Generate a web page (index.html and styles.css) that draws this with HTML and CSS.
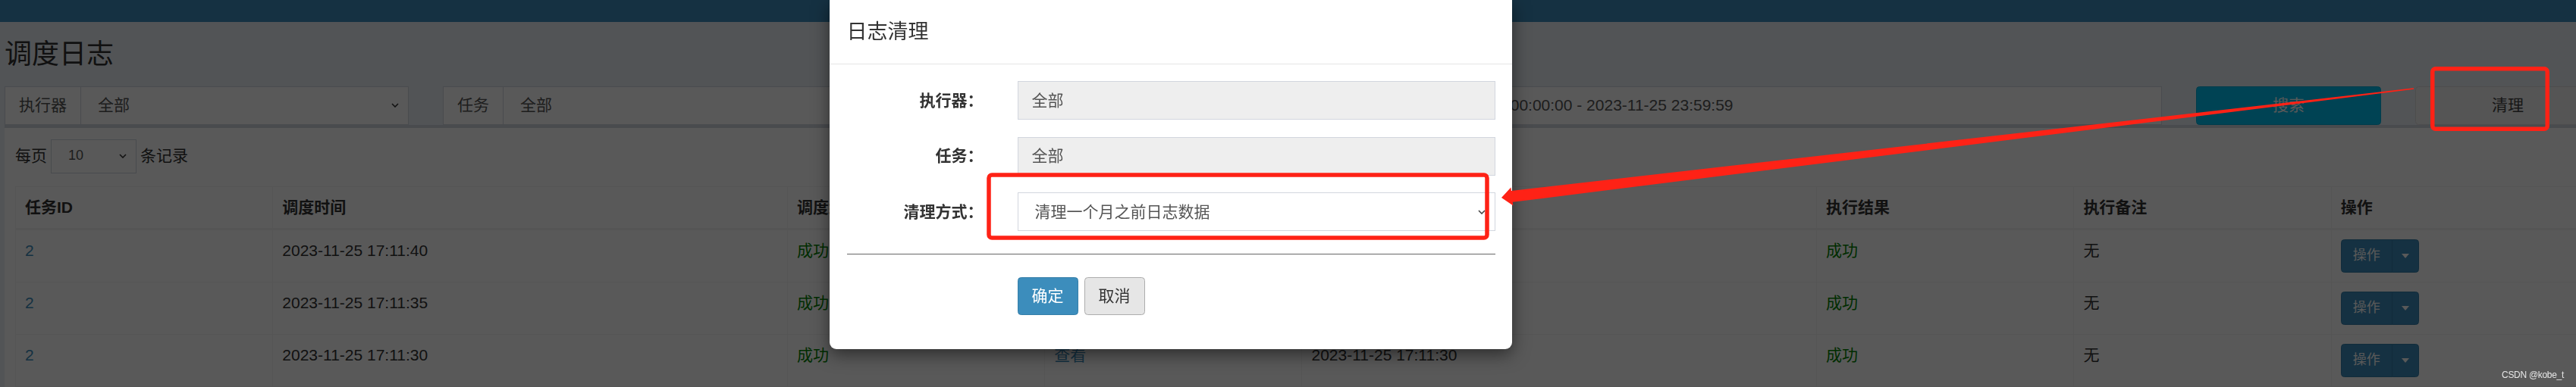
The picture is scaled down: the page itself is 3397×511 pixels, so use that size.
FILE: index.html
```html
<!DOCTYPE html>
<html lang="zh-CN">
<head>
<meta charset="utf-8">
<title>调度日志</title>
<link rel="stylesheet" href="styles.css">
</head>
<body>
<div class="page">
  <header class="topbar">
    <span class="topbar-link">注销</span>
  </header>
  <div class="wrapper">
    <section class="content-header">
      <h1>调度日志</h1>
    </section>
    <section class="content">
      <div class="filters">
        <div class="input-group span2">
          <span class="addon">执行器</span>
          <div class="control select"><span>全部</span><svg class="chev" viewBox="0 0 10 6"><path d="M1 1l4 4 4-4"/></svg></div>
        </div>
        <div class="input-group span2">
          <span class="addon">任务</span>
          <div class="control select"><span>全部</span><svg class="chev" viewBox="0 0 10 6"><path d="M1 1l4 4 4-4"/></svg></div>
        </div>
        <div class="input-group span2">
          <span class="addon">状态</span>
          <div class="control select"><span>全部</span><svg class="chev" viewBox="0 0 10 6"><path d="M1 1l4 4 4-4"/></svg></div>
        </div>
        <div class="input-group span4">
          <span class="addon">调度时间</span>
          <div class="control">2023-11-25 00:00:00 - 2023-11-25 23:59:59</div>
        </div>
        <div class="span1"><button class="btn btn-block btn-info" type="button">搜索</button></div>
        <div class="span1"><button class="btn btn-block btn-default" type="button">清理</button></div>
      </div>

      <div class="box">
        <div class="length">
          <span>每页</span>
          <div class="control select select-sm"><span>10</span><svg class="chev" viewBox="0 0 10 6"><path d="M1 1l4 4 4-4"/></svg></div>
          <span>条记录</span>
        </div>
        <table class="log-table">
          <colgroup>
            <col class="w10"><col class="w20"><col class="w10"><col class="w10"><col class="w20"><col class="w10"><col class="w10"><col class="w10">
          </colgroup>
          <thead>
            <tr><th>任务ID</th><th>调度时间</th><th>调度结果</th><th>调度备注</th><th>执行时间</th><th>执行结果</th><th>执行备注</th><th>操作</th></tr>
          </thead>
          <tbody>
            <tr>
              <td><a href="#">2</a></td><td>2023-11-25 17:11:40</td><td><span class="ok">成功</span></td><td><a href="#">查看</a></td><td>2023-11-25 17:11:40</td><td><span class="ok">成功</span></td><td>无</td>
              <td><div class="btn-group"><button class="btn btn-sm btn-primary" type="button">操作</button><button class="btn btn-sm btn-primary caret-btn" type="button"><span class="caret"></span></button></div></td>
            </tr>
            <tr>
              <td><a href="#">2</a></td><td>2023-11-25 17:11:35</td><td><span class="ok">成功</span></td><td><a href="#">查看</a></td><td>2023-11-25 17:11:35</td><td><span class="ok">成功</span></td><td>无</td>
              <td><div class="btn-group"><button class="btn btn-sm btn-primary" type="button">操作</button><button class="btn btn-sm btn-primary caret-btn" type="button"><span class="caret"></span></button></div></td>
            </tr>
            <tr>
              <td><a href="#">2</a></td><td>2023-11-25 17:11:30</td><td><span class="ok">成功</span></td><td><a href="#">查看</a></td><td>2023-11-25 17:11:30</td><td><span class="ok">成功</span></td><td>无</td>
              <td><div class="btn-group"><button class="btn btn-sm btn-primary" type="button">操作</button><button class="btn btn-sm btn-primary caret-btn" type="button"><span class="caret"></span></button></div></td>
            </tr>
          </tbody>
        </table>
      </div>
    </section>
  </div>
</div>

<div class="backdrop"></div>

<div class="modal">
  <div class="modal-header">
    <h4 class="modal-title">日志清理</h4>
  </div>
  <form class="modal-body">
    <div class="form-row">
      <label>执行器：</label>
      <div class="field"><div class="control disabled">全部</div></div>
    </div>
    <div class="form-row">
      <label>任务：</label>
      <div class="field"><div class="control disabled">全部</div></div>
    </div>
    <div class="form-row">
      <label>清理方式：</label>
      <div class="field"><div class="control select modal-select"><span>清理一个月之前日志数据</span><svg class="chev" viewBox="0 0 10 6"><path d="M1 1l4 4 4-4"/></svg></div></div>
    </div>
    <hr>
    <div class="form-row">
      <div class="field offset">
        <button class="btn btn-primary" type="button">确定</button>
        <button class="btn btn-cancel" type="button">取消</button>
      </div>
    </div>
  </form>
</div>

<svg class="annotations" viewBox="0 0 3397 511">
  <rect x="3207.75" y="90.75" width="151.5" height="79.5" rx="4"/>
  <rect x="1304" y="231" width="657" height="83" rx="4"/>
  <polygon class="arrow" points="1980,261 1992.4,247.6 1993,252 3182.9,116.3 3183.1,117.7 1994.8,266.8 1995.4,271.5"/>
</svg>

<div class="watermark">CSDN @kobe_t</div>
</body>
</html>
```

FILE: styles.css
```css
html, body {
  margin: 0;
  padding: 0;
}

body {
  position: relative;
  width: 3397px;
  height: 511px;
  overflow: hidden;
  background: #ecf0f5;
  font-family: "Liberation Sans", "Noto Sans CJK SC", sans-serif;
  font-size: 21px;
  line-height: 1.42857;
  color: #333;
}

.page {
  width: 3440px;
}

/* top navigation bar (scrolled, only its bottom is visible) */
.topbar {
  height: 29px;
  background: #3c8dbc;
  overflow: hidden;
  display: flex;
  justify-content: flex-end;
}

.topbar-link {
  color: #fff;
  font-size: 20px;
  line-height: 30px;
  margin-top: -27px;
  margin-right: 96px;
}

.wrapper {
  padding-left: 6px;
}

.content-header {
  padding-top: 22.5px;
}

.content-header h1 {
  margin: 0;
  font-size: 36px;
  line-height: 1.1;
  font-weight: 400;
  color: #333;
}

.content {
  padding-top: 22.5px;
}

/* filter row */
.filters {
  display: grid;
  grid-template-columns: repeat(12, 244px);
  column-gap: 45px;
}

.span1 { grid-column: span 1; }
.span2 { grid-column: span 2; }
.span4 { grid-column: span 4; }

.input-group {
  display: flex;
  height: 51px;
}

.addon {
  flex: none;
  padding: 0 18px;
  display: flex;
  align-items: center;
  border: 1px solid #d2d6de;
  border-right: 0;
  background: #fff;
  color: #555;
  white-space: nowrap;
}

.control {
  flex: 1;
  min-width: 0;
  box-sizing: border-box;
  height: 51px;
  display: flex;
  align-items: center;
  padding: 0 18px;
  border: 1px solid #d2d6de;
  background: #fff;
  color: #555;
  white-space: nowrap;
  overflow: hidden;
}

.control.select {
  justify-content: space-between;
  padding-left: 22px;
  padding-right: 12px;
}

.chev {
  flex: none;
  width: 10px;
  height: 6px;
  fill: none;
  stroke: #333;
  stroke-width: 1.6;
}

.btn {
  font-family: inherit;
  font-size: 21px;
  line-height: 30px;
  padding: 9px 18px;
  border: 1px solid transparent;
  border-radius: 4.5px;
  cursor: pointer;
  box-sizing: border-box;
}

.btn-block {
  display: block;
  width: 100%;
  height: 51px;
}

.btn-info {
  background: #00c0ef;
  border-color: #00acd6;
  color: #fff;
}

.btn-default {
  background: #f4f4f4;
  border-color: #ddd;
  color: #444;
}

.btn-primary {
  background: #3c8dbc;
  border-color: #367fa9;
  color: #fff;
}

.btn-cancel {
  background: #e6e6e6;
  border-color: #adadad;
  color: #333;
}

/* log box */
.box {
  width: 3423px;
  box-sizing: border-box;
  border-top: 4.5px solid #d2d6de;
  background: #fff;
  padding: 15px 15px 0 14px;
  height: 400px;
}

.length {
  display: flex;
  align-items: center;
  gap: 5px;
  height: 45px;
}

.select-sm {
  flex: none;
  width: 113px;
  height: 45px;
  font-size: 18px;
}

.log-table {
  margin-top: 17px;
  width: 100%;
  table-layout: fixed;
  border-collapse: collapse;
  border: 1px solid #f4f4f4;
}

.w10 { width: 10%; }
.w20 { width: 20%; }

.log-table th,
.log-table td {
  padding: 12px;
  border: 1px solid #f4f4f4;
  text-align: left;
  vertical-align: top;
  line-height: 30px;
  white-space: nowrap;
}

.log-table th {
  font-weight: bold;
  border-bottom-width: 3px;
}

.log-table a {
  color: #3c8dbc;
  text-decoration: none;
}

.ok {
  color: green;
}

.btn-group {
  display: inline-flex;
}

.btn-sm {
  font-size: 18px;
  line-height: 27px;
  padding: 7.5px 15px;
  height: 44px;
}

.btn-group .btn-sm:first-child {
  border-radius: 4.5px 0 0 4.5px;
}

.caret-btn {
  margin-left: -1px;
  padding: 0 12px;
  border-radius: 0 4.5px 4.5px 0;
  display: flex;
  align-items: center;
}

.caret {
  display: block;
  width: 0;
  height: 0;
  border-top: 6px solid #fff;
  border-left: 5px solid transparent;
  border-right: 5px solid transparent;
}

/* modal */
.backdrop {
  position: fixed;
  inset: 0;
  background: rgba(0, 0, 0, 0.65);
}

.modal {
  position: absolute;
  left: 1094px;
  top: 0;
  width: 900px;
  box-sizing: border-box;
  background: #fff;
  border-radius: 0 0 9px 9px;
  box-shadow: 0 7px 22px rgba(0, 0, 0, 0.5);
}

.modal-header {
  padding: 22.5px;
  border-bottom: 1px solid #e5e5e5;
}

.modal-title {
  margin: 0;
  font-size: 27px;
  line-height: 1.42857;
  font-weight: 400;
  color: #333;
}

.modal-body {
  display: block;
  margin: 0;
  padding: 22.5px;
}

.form-row {
  display: flex;
  align-items: center;
  margin: 0 -22.5px 22.5px;
}

.form-row label {
  flex: none;
  width: 225px;
  box-sizing: border-box;
  padding: 0 22.5px;
  text-align: right;
  font-weight: bold;
  color: #333;
}

.field {
  flex: none;
  width: 675px;
  box-sizing: border-box;
  padding: 0 22.5px;
  display: flex;
  gap: 8px;
}

.field.offset {
  margin-left: 225px;
}

.control.disabled {
  background: #eee;
}

.modal-select .chev {
  stroke: #444;
}

.modal-body hr {
  border: 0;
  border-top: 1px solid #666;
  margin: 30px 0;
  height: 0;
}

/* screenshot annotations */
.annotations {
  position: absolute;
  left: 0;
  top: 0;
  width: 3397px;
  height: 511px;
  pointer-events: none;
}

.annotations rect {
  fill: none;
  stroke: #fe2216;
  stroke-width: 5.5;
}

.annotations .arrow {
  fill: #fe2216;
}

.watermark {
  position: absolute;
  right: 16px;
  bottom: 8px;
  font-family: "Liberation Sans", sans-serif;
  font-size: 12px;
  line-height: 15px;
  letter-spacing: -0.3px;
  color: rgba(255, 255, 255, 0.85);
}
```
